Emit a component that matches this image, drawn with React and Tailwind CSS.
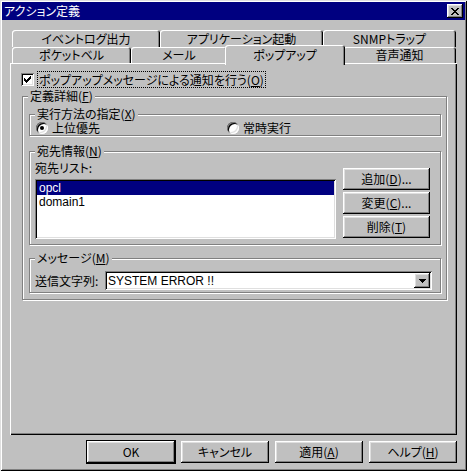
import React from 'react'

const raised =
  'bg-[#c0c0c0] shadow-[inset_-1px_-1px_0_#000,inset_1px_1px_0_#fff,inset_-2px_-2px_0_#808080,inset_2px_2px_0_#dfdfdf]'
const sunken =
  'bg-white shadow-[inset_1px_1px_0_#808080,inset_-1px_-1px_0_#fff,inset_2px_2px_0_#000,inset_-2px_-2px_0_#dfdfdf]'

function Tab({ label, w, active }) {
  return (
    <div
      className={`flex shrink-0 items-center justify-center rounded-t-[3px] bg-[#c0c0c0] shadow-[inset_1px_1px_0_#fff,inset_-1px_0_0_#000,inset_-2px_0_0_#808080] ${w} ${
        active ? 'relative z-10 -mx-[2px] -mt-[2px] h-[20px] pb-[2px] pt-[1px]' : 'h-full'
      }`}
    >
      {label}
    </div>
  )
}

function Group({ label, className = '', children }) {
  return (
    <div className={`relative border border-[#808080] shadow-[inset_1px_1px_0_#fff,1px_1px_0_#fff] ${className}`}>
      <span className="absolute -top-[7px] left-[5px] bg-[#c0c0c0] px-[2px] leading-[12px]">{label}</span>
      {children}
    </div>
  )
}

function Button({ children, w = 'w-[87px]', isDefault }) {
  return (
    <button
      type="button"
      className={`flex h-[22px] items-center justify-center ${w} ${raised} ${isDefault ? 'outline outline-1 outline-black' : ''}`}
    >
      {children}
    </button>
  )
}

function Radio({ checked, label, className = '' }) {
  return (
    <label className={`flex items-center gap-[4px] ${className}`}>
      <span className={`flex h-[12px] w-[12px] items-center justify-center rounded-full ${sunken}`}>
        {checked ? <span className="h-[4px] w-[4px] rounded-full bg-black" /> : null}
      </span>
      <span>{label}</span>
    </label>
  )
}

export default function App() {
  return (
    <div className="relative h-[471px] w-[467px] overflow-hidden bg-[#c0c0c0] font-['Noto_Sans_CJK_JP',sans-serif] text-[12px] leading-[14px] text-black [font-feature-settings:'palt'] shadow-[inset_1px_1px_0_#dfdfdf,inset_-1px_-1px_0_#000,inset_2px_2px_0_#fff,inset_-2px_-2px_0_#808080]">
      {/* title bar */}
      <div className="mx-[2px] mt-[2px] flex h-[18px] items-center justify-between bg-[#000080] px-[2px] text-white">
        <span>アクション定義</span>
        <button type="button" className={`flex h-[14px] w-[16px] items-center justify-center ${raised}`} aria-label="閉じる">
          <svg width="8" height="7" viewBox="0 0 8 7" shapeRendering="crispEdges">
            <path
              d="M0 0h2v1H0zM6 0h2v1H6zM1 1h2v1H1zM5 1h2v1H5zM2 2h4v1H2zM3 3h2v1H3zM2 4h4v1H2zM1 5h2v1H1zM5 5h2v1H5zM0 6h2v1H0zM6 6h2v1H6z"
              fill="#000"
            />
          </svg>
        </button>
      </div>

      <div className="mx-[10px]">
        {/* tabs */}
        <div className="ml-[2px] mt-[10px] flex h-[17px]">
          <Tab label="イベントログ出力" w="w-[148px]" />
          <Tab label="アプリケーション起動" w="w-[163px]" />
          <Tab label="SNMPトラップ" w="w-[133px]" />
        </div>
        <div className="ml-[2px] flex h-[16px] items-start">
          <Tab label="ポケットベル" w="w-[119px]" />
          <Tab label="メール" w="w-[96px]" />
          <Tab label="ポップアップ" w="w-[120px]" active />
          <Tab label="音声通知" w="w-[113px]" />
        </div>

        {/* panel */}
        <div className="h-[372px] pl-[11px] pr-[10px] pt-[8px] shadow-[inset_1px_1px_0_#fff,inset_-1px_-1px_0_#000,inset_-2px_-2px_0_#808080]">
          <div className="flex h-[17px] items-center">
            <span className={`flex h-[13px] w-[13px] items-center justify-center ${sunken}`}>
              <svg width="7" height="7" viewBox="0 0 7 7" shapeRendering="crispEdges">
                <path d="M6 0h1v1H6zM5 1h2v1H5zM0 2h1v1H0zM4 2h3v1H4zM0 3h2v1H0zM3 3h3v1H3zM0 4h5v1H0zM1 5h3v1H1zM2 6h1v1H2z" fill="#000" />
              </svg>
            </span>
            <span className="ml-[3px] h-[17px] border border-dotted border-black px-[1px] leading-[15px]">
              ポップアップメッセージによる通知を行う(<u>O</u>)
            </span>
          </div>

          <Group label={<>定義詳細(<u>F</u>)</>} className="ml-[1px] mt-[8px] pb-[6px] pl-[6px] pr-[5px] pt-[17px]">
            <Group label={<>実行方法の指定(<u>X</u>)</>} className="h-[22px]">
              <div className="mt-[6px] flex h-[13px] items-center pl-[6px] leading-[13px]">
                <Radio checked label="上位優先" className="w-[191px]" />
                <Radio label="常時実行" />
              </div>
            </Group>

            <Group label={<>宛先情報(<u>N</u>)</>} className="mt-[15px] h-[94px]">
              <div className="flex pl-[5px]">
                <div className="w-[301px]">
                  <div className="mt-[9px] h-[14px]">宛先リスト:</div>
                  <div className={`mt-[4px] h-[60px] p-[2px] font-['Liberation_Sans',sans-serif] ${sunken}`}>
                    <div className="h-[14px] bg-[#000080] pl-[2px] leading-[14px] text-white">opcl</div>
                    <div className="h-[14px] pl-[2px] leading-[14px]">domain1</div>
                  </div>
                </div>
                <div className="ml-[7px] mt-[16px] flex flex-col gap-[2px]">
                  <Button>
                    追加(<u>D</u>)...
                  </Button>
                  <Button>
                    変更(<u>C</u>)...
                  </Button>
                  <Button>
                    削除(<u>T</u>)
                  </Button>
                </div>
              </div>
            </Group>

            <Group label={<>メッセージ(<u>M</u>)</>} className="mt-[13px] h-[35px]">
              <div className="flex items-center pl-[5px] pt-[12px]">
                <span className="w-[70px]">送信文字列:</span>
                <div className={`flex h-[19px] w-[327px] items-center justify-between p-[2px] ${sunken}`}>
                  <span className="pl-[1px] font-['Liberation_Sans',sans-serif]">SYSTEM ERROR !!</span>
                  <span className={`flex h-[15px] w-[16px] items-center justify-center ${raised}`}>
                    <svg width="7" height="4" viewBox="0 0 7 4" shapeRendering="crispEdges">
                      <path d="M0 0h7v1H0zM1 1h5v1H1zM2 2h3v1H2zM3 3h1v1H3z" fill="#000" />
                    </svg>
                  </span>
                </div>
              </div>
            </Group>
          </Group>
        </div>

        {/* dialog buttons */}
        <div className="mt-[6px] flex justify-end gap-[6px]">
          <Button w="w-[88px]" isDefault>
            OK
          </Button>
          <Button w="w-[88px]">キャンセル</Button>
          <Button w="w-[88px]">
            適用(<u>A</u>)
          </Button>
          <Button w="w-[88px]">
            ヘルプ(<u>H</u>)
          </Button>
        </div>
      </div>
    </div>
  )
}
